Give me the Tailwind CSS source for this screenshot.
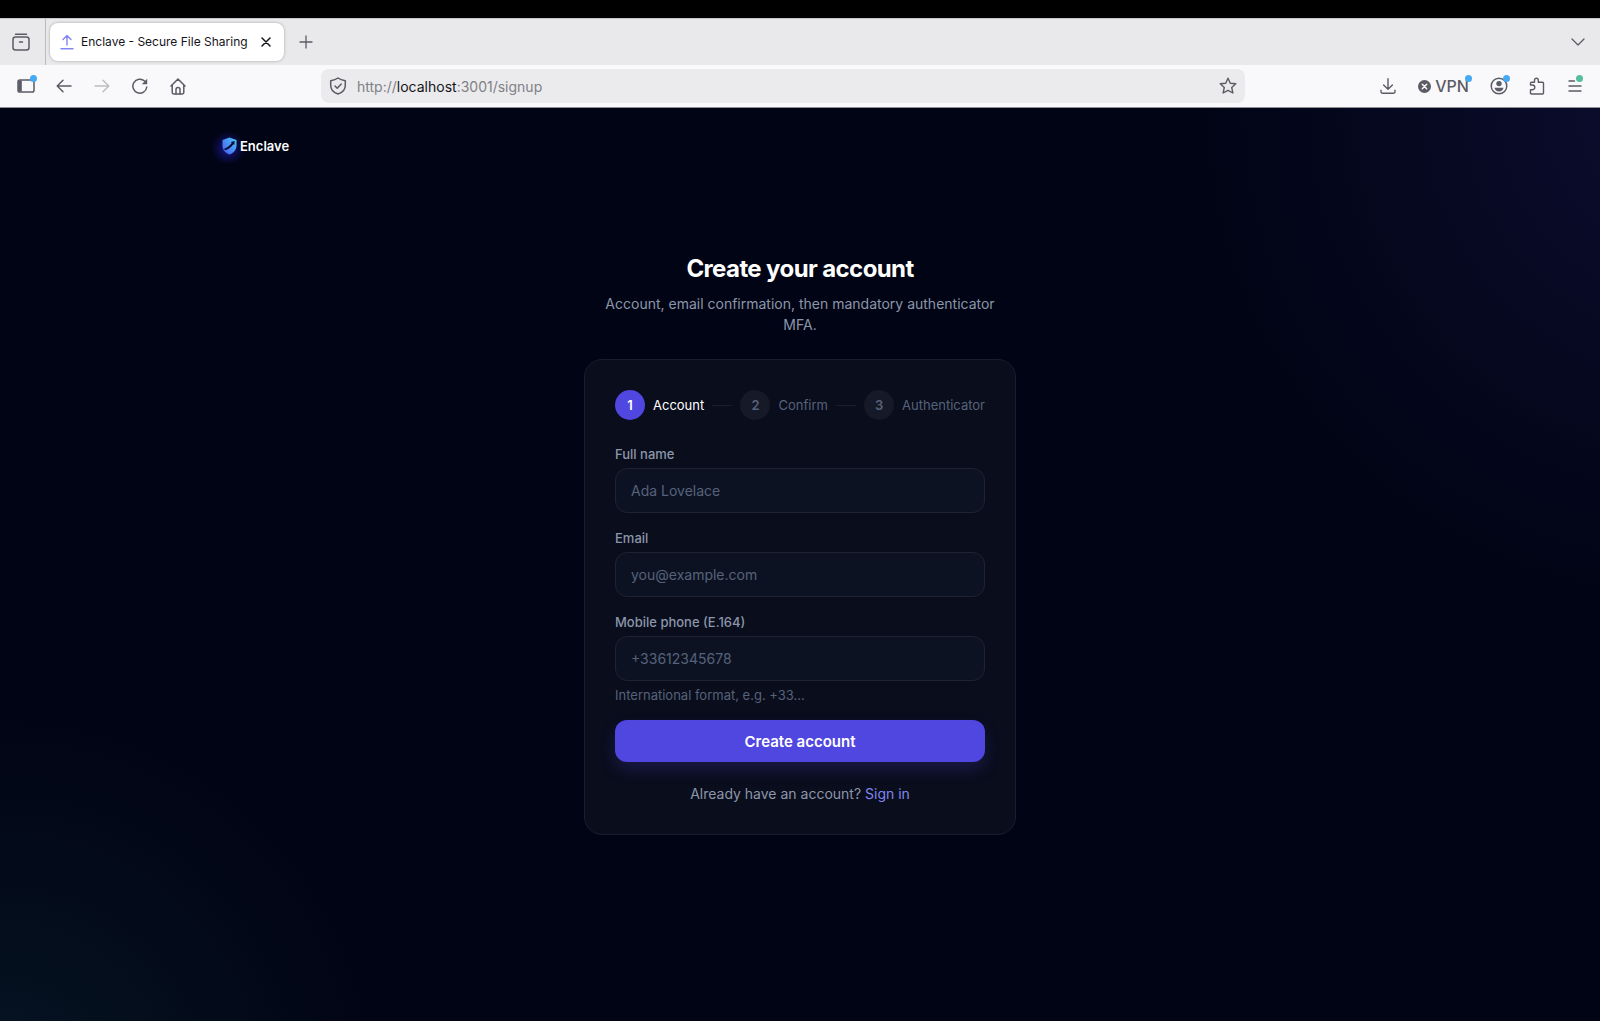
<!DOCTYPE html>
<html lang="en">
<head>
    <meta charset="UTF-8">
    <meta name="viewport" content="width=device-width, initial-scale=1.0">
    <title>Enclave - Secure File Sharing</title>
    <script src="https://cdn.jsdelivr.net/npm/@tailwindcss/browser@4"></script>
</head>
<body class="min-h-screen flex flex-col bg-[#010414] font-['Inter',sans-serif] text-sm leading-[21px]">

    <!-- Browser window -->
    <div class="h-[18px] bg-black"></div>

    <div class="h-[47px] flex items-center bg-[#e9e9eb] border-t border-[#c4c4c8] text-[#5b5b66]">
        <button aria-label="Recent tabs" class="w-[46px] h-full pr-[3px] flex items-center justify-center border-r border-[#b9b9be]">
            <svg class="size-[18px]" viewBox="0 0 18 18" fill="none" stroke="currentColor" stroke-width="1.5" stroke-linecap="round">
                <path d="M3.5 1.2h11"/>
                <rect x="1" y="4" width="16" height="13" rx="2.5"/>
                <path d="M7.5 9h3"/>
            </svg>
        </button>
        <div class="ml-1 w-[234px] h-[38px] px-[10px] flex items-center rounded-lg bg-white shadow-[0_0_3px_rgba(0,0,0,0.3)]">
            <svg class="w-[14px] h-4 shrink-0" viewBox="0 0 14 16" fill="none" stroke="#8285f5" stroke-width="1.4" stroke-linecap="round" stroke-linejoin="round">
                <path d="M7 11V1.5M3 5.5l4-4 4 4M1 14.8h12"/>
            </svg>
            <span class="ml-[7px] flex-1 whitespace-nowrap text-xs text-[#15141a]">Enclave - Secure File Sharing</span>
            <button aria-label="Close tab" class="size-4 flex items-center justify-center text-[#15141a]">
                <svg class="size-[10px]" viewBox="0 0 10 10" fill="none" stroke="currentColor" stroke-width="1.5" stroke-linecap="round"><path d="M1 1l8 8M9 1l-8 8"/></svg>
            </button>
        </div>
        <button aria-label="New tab" class="ml-3 size-5 flex items-center justify-center">
            <svg class="size-[14px]" viewBox="0 0 14 14" fill="none" stroke="currentColor" stroke-width="1.3" stroke-linecap="round"><path d="M7 1v12M1 7h12"/></svg>
        </button>
        <button aria-label="List all tabs" class="ml-auto mr-3 size-5 flex items-center justify-center">
            <svg class="w-[14px] h-2" viewBox="0 0 14 8" fill="none" stroke="currentColor" stroke-width="1.3" stroke-linecap="round" stroke-linejoin="round"><path d="M1 1l6 6 6-6"/></svg>
        </button>
    </div>

    <div class="h-[43px] pl-[7px] pr-[6px] flex items-center bg-[#f9f9fb] border-b border-[#8f8f98] text-[#5b5b66]">
        <div class="flex">
            <button aria-label="Sidebar" class="relative w-[38px] h-8 flex items-center justify-center">
                <svg class="w-[18px] h-[14px]" viewBox="0 0 18 14" fill="none" stroke="currentColor" stroke-width="1.5">
                    <rect x="1" y="1" width="16" height="12" rx="1.8"/>
                    <path d="M1.2 1.5h3.6v11H1.2z" fill="currentColor" stroke="none"/>
                </svg>
                <span class="absolute right-[8px] top-[5px] size-[7px] rounded-full bg-[#45aaf2]"></span>
            </button>
            <button aria-label="Back" class="w-[38px] h-8 flex items-center justify-center">
                <svg class="size-4" viewBox="0 0 16 16" fill="none" stroke="currentColor" stroke-width="1.5" stroke-linecap="round" stroke-linejoin="round"><path d="M15 8H1.2M7 2.2L1.2 8 7 13.8"/></svg>
            </button>
            <button aria-label="Forward" class="w-[38px] h-8 flex items-center justify-center text-[#bdbdc2]">
                <svg class="size-4" viewBox="0 0 16 16" fill="none" stroke="currentColor" stroke-width="1.5" stroke-linecap="round" stroke-linejoin="round"><path d="M1 8h13.8M9 2.2L14.8 8 9 13.8"/></svg>
            </button>
            <button aria-label="Reload" class="w-[38px] h-8 flex items-center justify-center">
                <svg class="size-4" viewBox="0 0 16 16" fill="none" stroke="currentColor" stroke-width="1.5" stroke-linecap="round">
                    <path d="M14.8 9A7 7 0 1 1 12.6 3"/>
                    <path d="M15.2.8v5.4H9.8z" fill="currentColor" stroke="none"/>
                </svg>
            </button>
            <button aria-label="Home" class="w-[38px] h-8 flex items-center justify-center">
                <svg class="w-4 h-[17px]" viewBox="0 0 16 17" fill="none" stroke="currentColor" stroke-width="1.5" stroke-linecap="round" stroke-linejoin="round">
                    <path d="M1 8l7-7 7 7M2.2 7v7.6c0 .9.6 1.4 1.4 1.4h8.800c.8 0 1.400-.5 1.400-1.400V7"/>
                    <path d="M6 16v-4.500a2 2 0 0 1 4 0V16"/>
                </svg>
            </button>
        </div>

        <div class="flex-1 mx-[124px] h-[34px] px-2 flex items-center rounded-lg bg-[#ebebed]">
            <svg class="size-[18px] shrink-0" viewBox="0 0 18 18" fill="none" stroke="currentColor" stroke-width="1.5" stroke-linecap="round" stroke-linejoin="round">
                <path d="M9 1c2.300 1.700 4.600 2.300 7.300 2.700v4.500c0 4.100-2.800 7.400-7.300 8.800-4.500-1.400-7.300-4.700-7.300-8.800V3.700C4.400 3.300 6.700 2.700 9 1z"/>
                <path d="M6 9l2.200 2.200 4-4.200"/>
            </svg>
            <a href="http://localhost:3001/signup" class="ml-[10px] flex-1 text-[#808086]">http://<span class="text-[#15141a]">localhost</span>:3001/signup</a>
            <button aria-label="Bookmark this page" class="size-[18px]">
                <svg class="size-[18px]" viewBox="0 0 18 18" fill="none" stroke="currentColor" stroke-width="1.4" stroke-linejoin="round"><path d="M9 1.200l2.300 5 5.500.6-4.100 3.700 1.200 5.500L9 13.300 4.100 16l1.200-5.500L1.200 6.800l5.500-.6z"/></svg>
            </button>
        </div>

        <div class="flex">
            <button aria-label="Downloads" class="w-[38px] h-8 flex items-center justify-center">
                <svg class="size-4" viewBox="0 0 16 16" fill="none" stroke="currentColor" stroke-width="1.4" stroke-linecap="round" stroke-linejoin="round"><path d="M8 .8v10.400M3.600 7L8 11.300 12.400 7M1 12.200v1.600c0 .9.500 1.400 1.400 1.400h11.200c.9 0 1.400-.5 1.400-1.400v-1.600"/></svg>
            </button>
            <button class="relative w-[73px] h-8 flex items-center justify-center gap-1 font-medium text-base">
                <svg class="size-[13px]" viewBox="0 0 13 13"><circle cx="6.500" cy="6.500" r="6.500" fill="#5b5b66"/><path d="M4.300 4.300l4.400 4.400M8.700 4.300L4.300 8.700" stroke="#f9f9fb" stroke-width="1.500" stroke-linecap="round"/></svg>
                VPN
                <span class="absolute right-[8px] top-[5px] size-[7px] rounded-full bg-[#45aaf2]"></span>
            </button>
            <button aria-label="Account" class="relative w-[38px] h-8 flex items-center justify-center">
                <svg class="size-[18px]" viewBox="0 0 18 18">
                    <circle cx="9" cy="9" r="7.800" fill="none" stroke="currentColor" stroke-width="1.500"/>
                    <circle cx="9" cy="6.600" r="2.700" fill="currentColor"/>
                    <path d="M4.500 10.800h9c-.3 2.400-2.200 3.700-4.500 3.700s-4.200-1.300-4.500-3.700z" fill="currentColor"/>
                </svg>
                <span class="absolute right-[8px] top-[5px] size-[7px] rounded-full bg-[#45aaf2]"></span>
            </button>
            <button aria-label="Extensions" class="w-[38px] h-8 flex items-center justify-center">
                <svg class="size-[18px]" viewBox="0 0 18 18" fill="none" stroke="currentColor" stroke-width="1.400" stroke-linejoin="round"><path d="M2.500 8V6.300c0-.6.400-1 1-1h3V3.200a1.900 1.900 0 0 1 3.800 0v2.100h4.200c.6 0 1 .4 1 1v9.700c0 .6-.4 1-1 1h-11c-.6 0-1-.4-1-1v-3.200h1.900a2 2 0 0 0 0-4.800z"/></svg>
            </button>
            <button aria-label="Menu" class="relative w-[38px] h-8 flex items-center justify-center">
                <svg class="w-[14px] h-3" viewBox="0 0 14 12" fill="none" stroke="currentColor" stroke-width="1.400" stroke-linecap="round"><path d="M1 1h5.500M1 6h12M1 11h12"/></svg>
                <span class="absolute right-[11px] top-[5px] size-[7px] rounded-full bg-[#54bf98]"></span>
            </button>
        </div>
    </div>

    <!-- Page -->
    <div class="flex-1 bg-[radial-gradient(circle_at_106%_0%,#0c0e30_0%,#01041400_510px),radial-gradient(circle_at_0%_108%,#061523_0%,#01041400_380px)]">
        <header class="h-[76px] flex items-center">
            <div class="w-full max-w-[1176px] mx-auto flex">
                <a href="#" class="h-[34px] pl-[10px] pr-[6px] flex items-center gap-[3px] bg-[radial-gradient(circle_at_16px_19px,#1c249a_0%,#0a0c4a_9px,#02031600_17px)] font-semibold text-[13px] text-white">
                    <svg class="w-[15px] h-[18px]" viewBox="0 0 15 18">
                        <defs>
                            <linearGradient id="shield" x1="1" y1="0" x2="0" y2="1">
                                <stop offset="0" stop-color="#4cc9f5"/>
                                <stop offset="0.5" stop-color="#4b8df5"/>
                                <stop offset="1" stop-color="#4a5cf0"/>
                            </linearGradient>
                        </defs>
                        <path d="M7.500.5L14.500 3v5.500c0 4.300-2.700 7.300-7 9-4.300-1.700-7-4.700-7-9V3z" fill="url(#shield)"/>
                        <path d="M3 13.200c3-.6 6-2.700 8.300-6l.9.900.5-4-3.800 1 .9.900C7.800 8.600 5.500 10.600 2 11.900z" fill="#070b38"/>
                    </svg>
                    Enclave
                </a>
            </div>
        </header>

        <main class="w-full max-w-[432px] mx-auto pt-[69px]">
            <h1 class="text-center text-2xl leading-8 font-bold tracking-tight text-white">Create your account</h1>
            <p class="mt-2 px-4 text-center text-[#8b96aa]">Account, email confirmation, then mandatory authenticator MFA.</p>

            <form class="mt-6 p-[30px] rounded-[18px] border border-[#1b1d2c] bg-[#0a0d1c]">
                <ol class="flex items-center gap-2 text-[13px] leading-[18px] text-[#56627a]">
                    <li class="flex items-center gap-2 text-white">
                        <span class="size-[30px] flex items-center justify-center rounded-full bg-[#5046e0] font-semibold">1</span>
                        Account
                    </li>
                    <li class="flex-1 h-px bg-[#1b1d2c]"></li>
                    <li class="flex items-center gap-2">
                        <span class="size-[30px] flex items-center justify-center rounded-full bg-[#161927] font-semibold">2</span>
                        Confirm
                    </li>
                    <li class="flex-1 h-px bg-[#1b1d2c]"></li>
                    <li class="flex items-center gap-2">
                        <span class="size-[30px] flex items-center justify-center rounded-full bg-[#161927] font-semibold">3</span>
                        Authenticator
                    </li>
                </ol>

                <div class="mt-[25px] flex flex-col gap-4">
                    <div>
                        <label for="name" class="block text-[13px] leading-[18px] font-medium text-[#8b96aa]">Full name</label>
                        <input type="text" id="name" placeholder="Ada Lovelace" class="mt-[5px] w-full h-[45px] px-[15px] rounded-xl border border-[#1f2231] bg-[#0d1223] text-white placeholder:text-[#56627a]">
                    </div>
                    <div>
                        <label for="email" class="block text-[13px] leading-[18px] font-medium text-[#8b96aa]">Email</label>
                        <input type="email" id="email" placeholder="you@example.com" class="mt-[5px] w-full h-[45px] px-[15px] rounded-xl border border-[#1f2231] bg-[#0d1223] text-white placeholder:text-[#56627a]">
                    </div>
                    <div>
                        <label for="phone" class="block text-[13px] leading-[18px] font-medium text-[#8b96aa]">Mobile phone (E.164)</label>
                        <input type="tel" id="phone" placeholder="+33612345678" class="mt-[5px] w-full h-[45px] px-[15px] rounded-xl border border-[#1f2231] bg-[#0d1223] text-white placeholder:text-[#56627a]">
                        <p class="mt-[5px] text-[13px] leading-[18px] text-[#56627a]">International format, e.g. +33…</p>
                    </div>
                    <button type="submit" class="h-[42px] rounded-xl bg-[#5046e0] font-semibold text-[15px] text-white shadow-[0_8px_16px_rgba(79,70,229,0.2)]">Create account</button>
                </div>

                <p class="mt-[21px] text-center text-[#8b96aa]">Already have an account? <a href="#" class="text-[#7f86f0]">Sign in</a></p>
            </form>
        </main>
    </div>

</body>
</html>
